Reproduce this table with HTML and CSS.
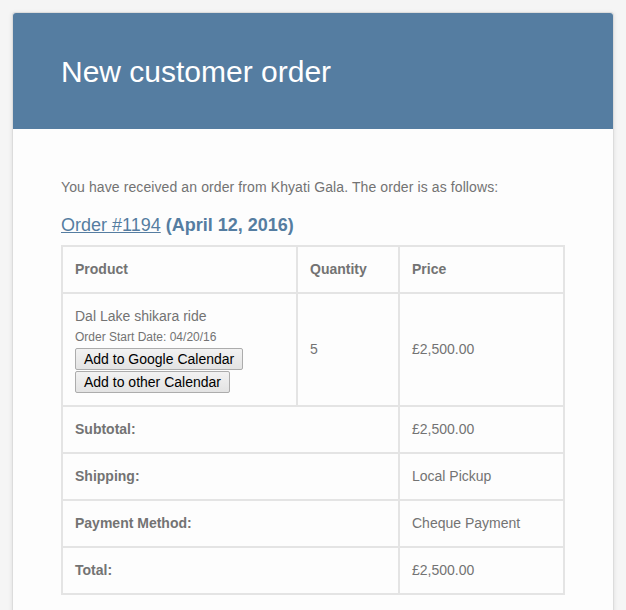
FILE: index.html
```html
<!DOCTYPE html>
<html>
<head>
<meta charset="utf-8">
<link rel="stylesheet" href="styles.css">
</head>
<body>
<div class="container">
  <div class="header">
    <h1 class="title">New customer order</h1>
  </div>
  <div class="body">
    <p class="intro">You have received an order from Khyati Gala. The order is as follows:</p>
    <h2 class="order-heading"><a class="order-link" href="#">Order #1194</a> (April 12, 2016)</h2>
    <table class="order-table">
      <thead>
        <tr>
          <th class="col-product">Product</th>
          <th class="col-qty">Quantity</th>
          <th class="col-price">Price</th>
        </tr>
      </thead>
      <tbody>
        <tr>
          <td class="col-product">
            <div class="item-name">Dal Lake shikara ride</div>
            <div class="item-meta">Order Start Date: 04/20/16</div>
            <button class="cal-btn" type="button">Add to Google Calendar</button>
            <button class="cal-btn cal-btn-second" type="button">Add to other Calendar</button>
          </td>
          <td class="col-qty">5</td>
          <td class="col-price">£2,500.00</td>
        </tr>
      </tbody>
      <tfoot>
        <tr>
          <th class="foot-label" colspan="2">Subtotal:</th>
          <td class="col-price">£2,500.00</td>
        </tr>
        <tr>
          <th class="foot-label" colspan="2">Shipping:</th>
          <td class="col-price">Local Pickup</td>
        </tr>
        <tr>
          <th class="foot-label" colspan="2">Payment Method:</th>
          <td class="col-price">Cheque Payment</td>
        </tr>
        <tr>
          <th class="foot-label" colspan="2">Total:</th>
          <td class="col-price">£2,500.00</td>
        </tr>
      </tfoot>
    </table>
  </div>
</div>
</body>
</html>
```

FILE: styles.css
```css
html, body {
  margin: 0;
  padding: 0;
}

body {
  background: #f5f5f5;
  padding: 12px;
  font-family: "Liberation Sans", Arial, sans-serif;
  color: #737373;
  font-size: 14px;
  line-height: 1.5;
}

.container {
  width: 600px;
  background: #fdfdfd;
  border: 1px solid #dcdcdc;
  border-radius: 3px;
  box-shadow: 0 1px 4px rgba(0, 0, 0, 0.1);
}

.header {
  background: #557da1;
  border-radius: 3px 3px 0 0;
  padding: 36px 48px 35px;
}

.title {
  margin: 0;
  color: #ffffff;
  font-size: 30px;
  font-weight: 300;
  line-height: 45px;
}

.body {
  padding: 48px 48px 60px;
}

.intro {
  margin: 0 0 16px;
  line-height: 21px;
  letter-spacing: 0.1px;
}

.order-heading {
  margin: 0 0 8px;
  color: #557da1;
  font-size: 18px;
  font-weight: bold;
  line-height: 23px;
}

.order-link {
  color: #557da1;
  font-weight: normal;
  text-decoration: underline;
}

.order-table {
  width: 504px;
  border-collapse: separate;
  border-spacing: 0;
  border: 1px solid #e4e4e4;
  table-layout: fixed;
}

.order-table th,
.order-table td {
  box-sizing: border-box;
  border: 1px solid #e4e4e4;
  padding: 12px;
  text-align: left;
  vertical-align: middle;
  color: #737373;
  font-size: 14px;
  line-height: 21px;
}

.order-table th {
  font-weight: bold;
}

.col-product {
  width: 235px;
}

.col-qty {
  width: 102px;
}

.col-price {
  width: 165px;
}

.item-name {
  line-height: 21px;
}

.item-meta {
  font-size: 12px;
  line-height: 21px;
}

.cal-btn {
  display: block;
  margin: 0;
  padding: 1px 8px;
  height: 22px;
  font-family: "Liberation Sans", Arial, sans-serif;
  font-size: 14px;
  line-height: 18px;
  color: #000000;
  background: linear-gradient(#f2f2f2, #e3e3e3);
  border: 1px solid #acacac;
  border-radius: 2px;
}

.cal-btn-second {
  margin-top: 1px;
}
```
